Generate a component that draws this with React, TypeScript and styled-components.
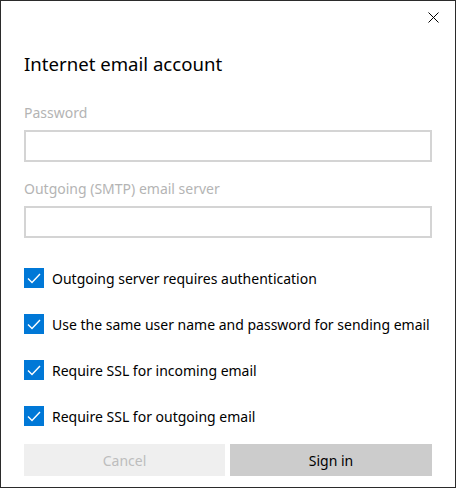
import React from 'react';
import styled, { createGlobalStyle } from 'styled-components';

const GlobalStyle = createGlobalStyle`
  html, body {
    margin: 0;
    padding: 0;
    background: #ffffff;
  }
  * {
    box-sizing: border-box;
  }
`;

const Window = styled.div`
  width: 456px;
  height: 488px;
  border: 1px solid #2b2b2b;
  background: #ffffff;
  padding: 0 22px 0 23px;
  display: flex;
  flex-direction: column;
  font-family: "Segoe UI", "Noto Sans", "Liberation Sans", sans-serif;
  color: #000000;
`;

const TitleBar = styled.div`
  height: 32px;
  display: flex;
  justify-content: flex-end;
  margin-right: -22px;
`;

const CloseButton = styled.button`
  width: 44px;
  height: 32px;
  border: none;
  background: transparent;
  padding: 0;
  display: flex;
  align-items: center;
  justify-content: center;
  cursor: pointer;
`;

const Title = styled.h1`
  margin: 17px 0 0;
  font-size: 18.6px;
  font-weight: 400;
  line-height: 28px;
`;

const FieldLabel = styled.label`
  display: block;
  margin-top: 25px;
  font-size: 14px;
  line-height: 20px;
  color: #b4b4b4;
`;

const TextInput = styled.input`
  display: block;
  width: 408px;
  height: 32px;
  margin-top: 7px;
  border: 2px solid #d4d4d4;
  background: #ffffff;
  outline: none;
  padding: 0 8px;
  font: inherit;
`;

const SecondLabel = styled(FieldLabel)`
  margin-top: 17px;
`;

const Options = styled.div`
  display: flex;
  flex-direction: column;
  gap: 26px;
  margin-top: 30px;
`;

const OptionRow = styled.label`
  display: flex;
  align-items: center;
  gap: 8px;
  height: 20px;
  font-size: 14px;
  white-space: nowrap;
  color: #000000;
`;

const CheckBox = styled.span<{ checked: boolean }>`
  width: 20px;
  height: 20px;
  flex: none;
  background: ${props => (props.checked ? '#0078d7' : '#ffffff')};
  border: ${props => (props.checked ? 'none' : '2px solid #333333')};
  display: flex;
  align-items: center;
  justify-content: center;
`;

const ButtonRow = styled.div`
  display: grid;
  grid-template-columns: 201px 202px;
  column-gap: 5px;
  margin-top: 18px;
`;

const ActionButton = styled.button<{ primary?: boolean }>`
  height: 32px;
  border: none;
  padding: 0;
  font: inherit;
  font-size: 14px;
  background: ${props => (props.primary ? '#cccccc' : '#efefef')};
  color: ${props => (props.primary ? '#000000' : '#bdbdbd')};
`;

const options = [
  'Outgoing server requires authentication',
  'Use the same user name and password for sending email',
  'Require SSL for incoming email',
  'Require SSL for outgoing email',
];

const App: React.FC = () => {
  return (
    <>
      <GlobalStyle />
      <Window>
        <TitleBar>
          <CloseButton aria-label="Close">
            <svg width="11" height="11" viewBox="0 0 11 11">
              <path d="M0.5 0.5 L10.5 10.5 M10.5 0.5 L0.5 10.5" stroke="#000" strokeWidth="1" />
            </svg>
          </CloseButton>
        </TitleBar>
        <Title>Internet email account</Title>

        <FieldLabel>Password</FieldLabel>
        <TextInput type="password" />

        <SecondLabel>Outgoing (SMTP) email server</SecondLabel>
        <TextInput type="text" />

        <Options>
          {options.map((text) => (
            <OptionRow key={text}>
              <CheckBox checked>
                <svg width="14" height="11" viewBox="0 0 14 11">
                  <path d="M1 5.5 L5 9.5 L13 1" stroke="#fff" strokeWidth="1.4" fill="none" />
                </svg>
              </CheckBox>
              {text}
            </OptionRow>
          ))}
        </Options>

        <ButtonRow>
          <ActionButton>Cancel</ActionButton>
          <ActionButton primary>Sign in</ActionButton>
        </ButtonRow>
      </Window>
    </>
  );
};

export default App;
